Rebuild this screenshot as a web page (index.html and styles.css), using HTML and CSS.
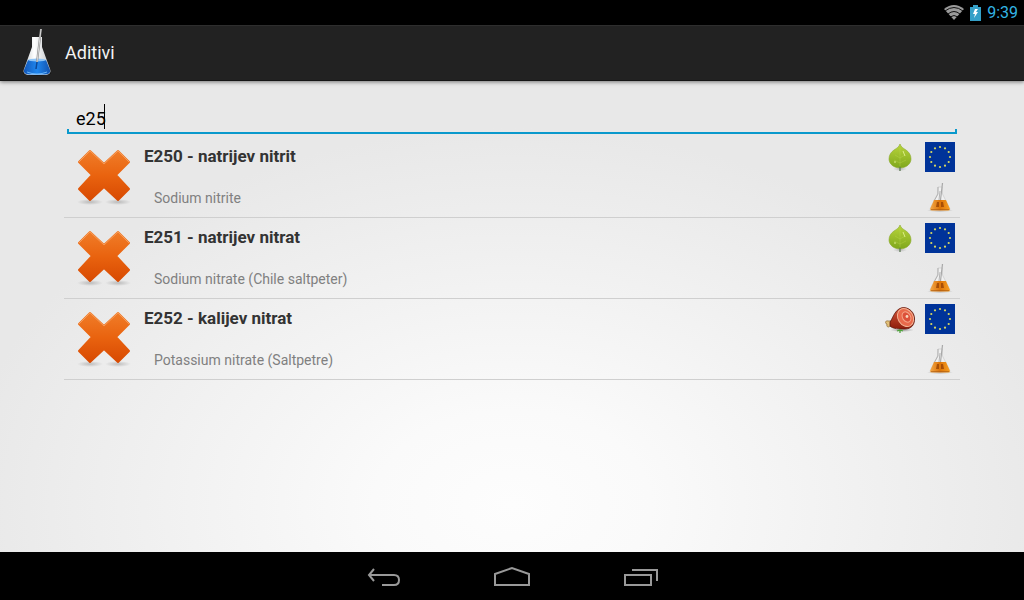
FILE: index.html
```
<!DOCTYPE html>
<html lang="sl">

<head>
     <meta charset="UTF-8">
     <meta name="viewport" content="width=device-width, initial-scale=1.0">
     <title>Aditivi</title>
     <link rel="stylesheet" href="styles.css">
</head>

<body>
     <!-- Shared icons -->
     <svg class="sprite" aria-hidden="true">
          <defs>
               <linearGradient id="orange" x1="0" y1="0" x2="0" y2="1">
                    <stop offset="0" stop-color="#f07c28" />
                    <stop offset="0.5" stop-color="#e9630f" />
                    <stop offset="1" stop-color="#d84a02" />
               </linearGradient>
               <radialGradient id="shade">
                    <stop offset="0" stop-color="#000" stop-opacity="0.35" />
                    <stop offset="1" stop-color="#000" stop-opacity="0" />
               </radialGradient>
               <radialGradient id="soft-shade">
                    <stop offset="0" stop-color="#000" stop-opacity="0.2" />
                    <stop offset="1" stop-color="#000" stop-opacity="0" />
               </radialGradient>
               <linearGradient id="leaf-green" x1="0" y1="0" x2="0" y2="1">
                    <stop offset="0" stop-color="#b9d53c" />
                    <stop offset="1" stop-color="#7fa71c" />
               </linearGradient>
               <linearGradient id="glass" x1="0" y1="0" x2="1" y2="0">
                    <stop offset="0" stop-color="#c3c9cc" />
                    <stop offset="0.4" stop-color="#fff" />
                    <stop offset="1" stop-color="#bfc4c8" />
               </linearGradient>
               <linearGradient id="blue" x1="0" y1="0" x2="1" y2="0">
                    <stop offset="0" stop-color="#1357b8" />
                    <stop offset="0.5" stop-color="#1f86ee" />
                    <stop offset="1" stop-color="#1253b0" />
               </linearGradient>
               <linearGradient id="amber" x1="0" y1="0" x2="1" y2="0">
                    <stop offset="0" stop-color="#f3a94a" />
                    <stop offset="0.5" stop-color="#dd7408" />
                    <stop offset="1" stop-color="#f7a024" />
               </linearGradient>
               <linearGradient id="meat" x1="0" y1="0" x2="0" y2="1">
                    <stop offset="0" stop-color="#d4583a" />
                    <stop offset="1" stop-color="#8e1c0c" />
               </linearGradient>
          </defs>

          <symbol id="cross" viewBox="0 0 60 64">
               <ellipse cx="16" cy="58" rx="13" ry="3" fill="url(#soft-shade)" />
               <ellipse cx="44" cy="58" rx="13" ry="3" fill="url(#soft-shade)" />
               <path d="M16 7 30 20 44 7 55 18 42 31 55 45 44 56 30 43 16 56 5 45 18 31 5 18Z" fill="url(#orange)" stroke="url(#orange)" stroke-width="2" stroke-linejoin="round" />
               <path d="M5 18 16 7 30 20 44 7 55 18" fill="none" stroke="#f79a58" stroke-width="1" stroke-linejoin="round" />
          </symbol>

          <symbol id="leaf" viewBox="0 0 30 30">
               <ellipse cx="15" cy="27" rx="7" ry="2" fill="url(#soft-shade)" />
               <path d="M15 2C16 5 18 6 21 8C24 10 26 13 26 17C26 22 21 26 15 26C9 26 4 22 4 17C4 13 6 10 9 8C12 6 14 5 15 2Z" fill="url(#leaf-green)" stroke="#8aa92c" stroke-width="0.6" />
               <path d="M15 6V24M15 16 10 13M15 16 20 13M15 21 9 18M15 21 21 18" fill="none" stroke="#c4dc58" stroke-width="0.5" opacity="0.6" />
               <path d="M18 9 20 14M10 19V21" stroke="#dced8a" stroke-width="1" />
               <path d="M15 25V29" stroke="#637d5b" stroke-width="1.4" />
          </symbol>

          <symbol id="ham" viewBox="0 0 30 30">
               <ellipse cx="17" cy="26" rx="12" ry="2" fill="url(#shade)" />
               <path d="M8 17 3 17C0 16 0 20 2 20C1 23 4 24 5 22L10 22Z" fill="#e3c27a" stroke="#8a6530" stroke-width="0.7" />
               <path d="M5 18C7 16 9 8 14 5C20 1 29 6 29.500 14C30 21 26 25 20 25C14 25 8 25 5 22Z" fill="url(#meat)" stroke="#5c140a" stroke-width="0.8" />
               <ellipse cx="20.500" cy="13.500" rx="7.500" ry="9.500" transform="rotate(-32 20.500 13.500)" fill="#e9694b" stroke="#f2b394" stroke-width="1" />
               <ellipse cx="21.500" cy="13" rx="4" ry="5.500" transform="rotate(-32 21.500 13)" fill="#dc5039" stroke="#f4a488" stroke-width="1" />
               <circle cx="22" cy="12.500" r="1.400" fill="#f8d6bd" />
               <path d="M12 27 15 26 18 27M15 26V29" fill="none" stroke="#4da33a" stroke-width="1.300" />
          </symbol>

          <symbol id="eu" viewBox="0 0 30 30">
               <rect width="30" height="30" fill="#003399" />
               <g fill="#d8d860">
                    <circle cx="15" cy="5" r="1.100" />
                    <circle cx="20" cy="6.300" r="1.100" />
                    <circle cx="23.700" cy="10" r="1.100" />
                    <circle cx="25" cy="15" r="1.100" />
                    <circle cx="23.700" cy="20" r="1.100" />
                    <circle cx="20" cy="23.700" r="1.100" />
                    <circle cx="15" cy="25" r="1.100" />
                    <circle cx="10" cy="23.700" r="1.100" />
                    <circle cx="6.300" cy="20" r="1.100" />
                    <circle cx="5" cy="15" r="1.100" />
                    <circle cx="6.300" cy="10" r="1.100" />
                    <circle cx="10" cy="6.300" r="1.100" />
               </g>
          </symbol>

          <symbol id="flask" viewBox="0 0 30 30">
               <ellipse cx="15" cy="28.500" rx="13" ry="1.500" fill="url(#shade)" />
               <path d="M13 5H17.500V12L25 27Q25 28.500 23 28.500H7Q5 28.500 5 27L12.500 12Z" fill="#f0f0f0" stroke="#c4c4c4" stroke-width="0.6" />
               <path d="M13 5V12L9 19M15 9 14 18" fill="none" stroke="#a5a5a5" stroke-width="0.8" />
               <path d="M9 18H21L25 27Q25 28.500 23 28.500H7Q5 28.500 5 27Z" fill="url(#amber)" />
               <path d="M12 20 14 20V25H11ZM16 20H18L19 25H16Z" fill="#984305" opacity="0.8" />
               <path d="M6 27.500H24" stroke="#a85a14" stroke-width="1" opacity="0.6" />
               <path d="M17.500 1 15.500 18" stroke="#a8a8a8" stroke-width="1.200" />
          </symbol>
     </svg>

     <div class="status-bar">
          <svg class="wifi" viewBox="0 0 20 15" aria-label="Wi-Fi">
               <path d="M10 15 0 4Q10 -4 20 4Z" fill="#9a9a9a" />
               <path d="M1 6Q10 -1 19 6M4 9Q10 4 16 9M6 12Q10 9 14 12" fill="none" stroke="#000" stroke-width="0.900" />
          </svg>
          <svg class="battery" viewBox="0 0 11 16" aria-label="Battery charging">
               <path d="M3 0H8V2H11V16H0V2H3Z" fill="#35a0c8" />
               <path d="M5 4 3 9H5L4 13 8 7H6L8 4Z" fill="#fff" />
          </svg>
          <span class="clock">9:39</span>
     </div>

     <header class="action-bar">
          <svg class="app-icon" viewBox="0 0 28 48" aria-hidden="true">
               <ellipse cx="14" cy="44" rx="14" ry="2.500" fill="#0c0c0c" />
               <path d="M9 8H19V18L27 40Q29 45 23 46H5Q-1 45 1 40L9 18Z" fill="url(#glass)" />
               <path d="M5 31H23L27 41Q28 45 22 45.500H6Q0 45 1 41Z" fill="url(#blue)" />
               <ellipse cx="14" cy="31" rx="9" ry="1.500" fill="#8fc5f8" />
               <path d="M4 43Q14 47 24 43" fill="none" stroke="#69b5fa" stroke-width="1" />
               <path d="M18 0 14 33" stroke="#888" stroke-width="2" />
               <path d="M18 0 14 33" stroke="#d8d8d8" stroke-width="1" />
               <path d="M14 33 13 40" stroke="#0d4796" stroke-width="1.500" />
          </svg>
          <h1>Aditivi</h1>
     </header>

     <main>
          <div class="search">
               <input type="text" value="e25" aria-label="Iskanje" spellcheck="false" autocomplete="off">
               <span class="caret"></span>
               <div class="underline"></div>
          </div>

          <ul class="additives">
               <li>
                    <svg class="verdict" aria-hidden="true"><use href="#cross" /></svg>
                    <div class="info">
                         <h2>E250 - natrijev nitrit</h2>
                         <p>Sodium nitrite</p>
                    </div>
                    <div class="tags">
                         <svg class="tag" aria-hidden="true"><use href="#leaf" /></svg>
                         <svg class="tag" aria-hidden="true"><use href="#eu" /></svg>
                         <svg class="tag last" aria-hidden="true"><use href="#flask" /></svg>
                    </div>
               </li>
               <li>
                    <svg class="verdict" aria-hidden="true"><use href="#cross" /></svg>
                    <div class="info">
                         <h2>E251 - natrijev nitrat</h2>
                         <p>Sodium nitrate (Chile saltpeter)</p>
                    </div>
                    <div class="tags">
                         <svg class="tag" aria-hidden="true"><use href="#leaf" /></svg>
                         <svg class="tag" aria-hidden="true"><use href="#eu" /></svg>
                         <svg class="tag last" aria-hidden="true"><use href="#flask" /></svg>
                    </div>
               </li>
               <li>
                    <svg class="verdict" aria-hidden="true"><use href="#cross" /></svg>
                    <div class="info">
                         <h2>E252 - kalijev nitrat</h2>
                         <p>Potassium nitrate (Saltpetre)</p>
                    </div>
                    <div class="tags">
                         <svg class="tag" aria-hidden="true"><use href="#ham" /></svg>
                         <svg class="tag" aria-hidden="true"><use href="#eu" /></svg>
                         <svg class="tag last" aria-hidden="true"><use href="#flask" /></svg>
                    </div>
               </li>
          </ul>
     </main>

     <nav class="nav-bar">
          <button type="button" aria-label="Back">
               <svg viewBox="0 0 36 24"><path d="M8 5 3 11 8 17M3 11H28Q33 11 33 16T28 21H16" /></svg>
          </button>
          <button type="button" aria-label="Home">
               <svg viewBox="0 0 36 24"><path d="M1 10 18 4 35 10V21H1Z" /></svg>
          </button>
          <button type="button" aria-label="Recent apps">
               <svg viewBox="0 0 36 24"><path d="M3 11H29V21H3ZM10 6H35V17" /></svg>
          </button>
     </nav>
</body>

</html>
```
FILE: styles.css
```
/* Base styles */
* {
     box-sizing: border-box;
}

body {
     margin: 0;
     min-height: 100vh;
     display: flex;
     flex-direction: column;
     background-color: #000;
     font-family: Roboto, "Noto Sans", sans-serif;
}

h1,
h2,
p,
ul {
     margin: 0;
     padding: 0;
}

.sprite {
     position: absolute;
     width: 0;
     height: 0;
}

/* System status bar */
.status-bar {
     height: 25px;
     padding-right: 6px;
     display: flex;
     justify-content: flex-end;
     align-items: center;
     gap: 6px;
     color: #33b5e5;
}

.wifi {
     width: 20px;
     height: 15px;
}

.battery {
     width: 11px;
     height: 16px;
}

.clock {
     font-size: 16px;
     line-height: 24px;
}

/* Title bar */
.action-bar {
     height: 56px;
     padding-left: 23px;
     display: flex;
     align-items: center;
     gap: 14px;
     background-color: #222;
     border-top: 1px solid #2e2e2e;
     border-bottom: 1px solid #161616;
     box-shadow: 0 1px 4px rgba(0, 0, 0, 0.5);
     z-index: 1;
}

.app-icon {
     width: 28px;
     height: 48px;
}

.action-bar h1 {
     color: #f3f3f3;
     font-size: 18px;
     font-weight: 400;
     line-height: 24px;
}

/* Content */
main {
     flex: 1;
     padding: 20px 64px;
     background: radial-gradient(ellipse 54% 80% at 50% 90%, #fdfdfd 0, #fafafa 25%, #e8e8e8 100%);
}

.search {
     position: relative;
     padding: 0 3px;
}

.search input {
     display: block;
     width: 100%;
     height: 28px;
     padding: 6px 9px 0;
     border: 0;
     outline: 0;
     background: none;
     color: #000;
     caret-color: transparent;
     font-family: inherit;
     font-size: 18px;
}

.caret {
     position: absolute;
     left: 40px;
     top: 3px;
     width: 1px;
     height: 25px;
     background-color: #000;
}

.underline {
     height: 5px;
     margin-bottom: 3px;
     border: 2px solid #0a99cc;
     border-top: 0;
}

.additives {
     list-style: none;
}

.additives li {
     display: flex;
     padding: 5px;
     border-bottom: 1px solid #cfcfcf;
}

.verdict {
     width: 60px;
     height: 64px;
     margin: 2px 10px 0 5px;
}

.info {
     flex: 1;
     display: flex;
     flex-direction: column;
     justify-content: space-between;
}

.info h2 {
     color: #333;
     font-size: 17px;
     font-weight: 700;
     line-height: 28px;
}

.info p {
     padding-left: 10px;
     color: #808080;
     font-size: 14px;
     line-height: 28px;
}

.tags {
     display: grid;
     grid-template-columns: 30px 30px;
     gap: 10px;
}

.tag {
     width: 30px;
     height: 30px;
}

.tag.last {
     grid-column: 2;
}

/* System navigation */
.nav-bar {
     height: 48px;
     display: flex;
     justify-content: center;
}

.nav-bar button {
     width: 128px;
     padding: 0;
     border: 0;
     background: none;
}

.nav-bar svg {
     width: 36px;
     height: 24px;
     display: block;
     margin: 0 auto;
     fill: none;
     stroke: #999;
     stroke-width: 2;
}
```
